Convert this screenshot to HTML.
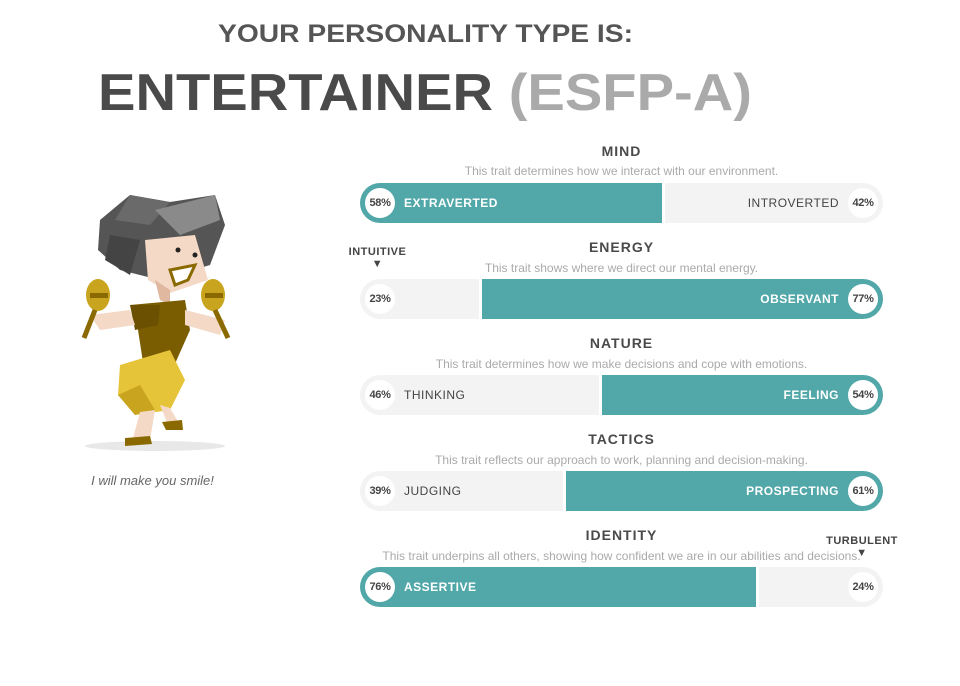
<!DOCTYPE html>
<html><head><meta charset="utf-8"><style>
body{margin:0;width:960px;height:686px;background:#fff;position:relative;overflow:hidden;font-family:"Liberation Sans",sans-serif}
.a{position:absolute}
.t{position:absolute;left:360px;width:523px;text-align:center;font-weight:bold;font-size:14px;color:#4a4a4a;letter-spacing:1px}
.s{position:absolute;left:250px;width:743px;text-align:center;font-size:12px;color:#aaa}
.bar{position:absolute;left:360px;width:523px;height:40px;border-radius:20px;overflow:hidden;background:#f3f3f3}
.teal{position:absolute;top:0;height:40px;background:#52a7a9}
.gap{position:absolute;top:0;width:3px;height:40px;background:#fff}
.c{position:absolute;top:5px;width:30px;height:30px;border-radius:50%;background:#fff;font-size:11px;font-weight:bold;color:#444;text-align:center;line-height:30px;letter-spacing:-.3px}
.l{position:absolute;top:0;line-height:40px;font-size:12px;letter-spacing:.5px}
.w{color:#fff;font-weight:bold}.g{color:#444}
.side{position:absolute;font-size:11px;font-weight:bold;color:#444;letter-spacing:.5px;text-align:center}
</style></head><body>
<svg class="a" style="left:0;top:0" width="960" height="130">
<text x="218" y="42" textLength="415" lengthAdjust="spacingAndGlyphs" font-family="Liberation Sans" font-weight="bold" font-size="25" fill="#555">YOUR PERSONALITY TYPE IS:</text>
<text x="98" y="110" textLength="654" lengthAdjust="spacingAndGlyphs" font-family="Liberation Sans" font-weight="bold" font-size="52" fill="#4a4a4a">ENTERTAINER <tspan fill="#aaa">(ESFP-A)</tspan></text>
</svg>

<svg class="a" style="left:70px;top:180px" width="180" height="280" viewBox="0 0 180 280">
<ellipse cx="85" cy="266" rx="70" ry="5" fill="#e8e8e8"/>
<polygon points="30,40 60,15 100,22 145,15 155,45 140,85 90,100 50,90 28,70" fill="#555"/>
<polygon points="60,15 100,22 80,45 45,40" fill="#6a6a6a"/>
<polygon points="85,30 145,15 150,40 110,55" fill="#8a8a8a"/>
<polygon points="40,55 70,60 60,95 35,80" fill="#444"/>
<polygon points="75,60 125,55 138,100 100,113 78,100" fill="#f4d9c6"/>
<polygon points="100,90 125,85 118,100 105,105" fill="#fff" stroke="#8a6a00" stroke-width="3"/>
<circle cx="108" cy="70" r="2.5" fill="#222"/><circle cx="125" cy="75" r="2.5" fill="#222"/>
<polygon points="85,100 100,110 100,125 90,120" fill="#e0b8a0"/>
<polygon points="60,125 115,120 120,150 100,195 75,195 68,150" fill="#7a5d00"/>
<polygon points="60,125 90,125 88,145 65,150" fill="#6a5000"/>
<polygon points="50,185 100,170 115,200 100,230 65,235 48,215" fill="#e6c43a"/>
<polygon points="48,215 65,235 85,230 70,205" fill="#c9a41e"/>
<polygon points="20,135 60,130 65,145 30,150" fill="#f4d9c6"/>
<polygon points="115,130 155,140 150,155 115,145" fill="#f4d9c6"/>
<ellipse cx="28" cy="115" rx="12" ry="16" fill="#c9a41e"/>
<rect x="20" y="113" width="18" height="5" fill="#8a6a00"/>
<line x1="25" y1="130" x2="14" y2="158" stroke="#8a6a00" stroke-width="5"/>
<ellipse cx="143" cy="115" rx="12" ry="16" fill="#c9a41e"/>
<rect x="135" y="113" width="18" height="5" fill="#8a6a00"/>
<line x1="145" y1="130" x2="158" y2="158" stroke="#8a6a00" stroke-width="5"/>
<polygon points="70,232 85,230 80,260 62,262" fill="#f4d9c6"/>
<polygon points="90,225 100,228 110,245 100,250" fill="#f4d9c6"/>
<polygon points="55,258 80,256 82,264 55,266" fill="#8a6a00"/>
<polygon points="92,242 112,240 113,250 96,250" fill="#8a6a00"/>
</svg>
<div class="a" style="left:60px;top:473px;width:185px;text-align:center;font-style:italic;font-size:13px;color:#666">I will make you smile!</div>

<div class="t" style="top:143px">MIND</div>
<div class="s" style="top:164px">This trait determines how we interact with our environment.</div>
<div class="bar" style="top:183px"><div class="teal" style="left:0;width:302px"></div><div class="gap" style="left:302px"></div>
<div class="c" style="left:5px">58%</div><div class="l w" style="left:44px">EXTRAVERTED</div>
<div class="l g" style="right:44px">INTROVERTED</div><div class="c" style="right:5px">42%</div></div>

<div class="side" style="left:340px;top:246px;width:75px">INTUITIVE<br>▼</div>
<div class="t" style="top:239px">ENERGY</div>
<div class="s" style="top:261px">This trait shows where we direct our mental energy.</div>
<div class="bar" style="top:279px"><div class="teal" style="left:122px;right:0"></div><div class="gap" style="left:119px"></div>
<div class="c" style="left:5px">23%</div>
<div class="l w" style="right:44px">OBSERVANT</div><div class="c" style="right:5px">77%</div></div>

<div class="t" style="top:335px">NATURE</div>
<div class="s" style="top:357px">This trait determines how we make decisions and cope with emotions.</div>
<div class="bar" style="top:375px"><div class="teal" style="left:242px;right:0"></div><div class="gap" style="left:239px"></div>
<div class="c" style="left:5px">46%</div><div class="l g" style="left:44px">THINKING</div>
<div class="l w" style="right:44px">FEELING</div><div class="c" style="right:5px">54%</div></div>

<div class="t" style="top:431px">TACTICS</div>
<div class="s" style="top:453px">This trait reflects our approach to work, planning and decision-making.</div>
<div class="bar" style="top:471px"><div class="teal" style="left:206px;right:0"></div><div class="gap" style="left:203px"></div>
<div class="c" style="left:5px">39%</div><div class="l g" style="left:44px">JUDGING</div>
<div class="l w" style="right:44px">PROSPECTING</div><div class="c" style="right:5px">61%</div></div>

<div class="t" style="top:527px">IDENTITY</div>
<div class="s" style="top:549px">This trait underpins all others, showing how confident we are in our abilities and decisions.</div>
<div class="side" style="left:817px;top:535px;width:90px">TURBULENT<br>▼</div>
<div class="bar" style="top:567px"><div class="teal" style="left:0;width:396px"></div><div class="gap" style="left:396px"></div>
<div class="c" style="left:5px">76%</div><div class="l w" style="left:44px">ASSERTIVE</div>
<div class="c" style="right:5px">24%</div></div>
</body></html>
